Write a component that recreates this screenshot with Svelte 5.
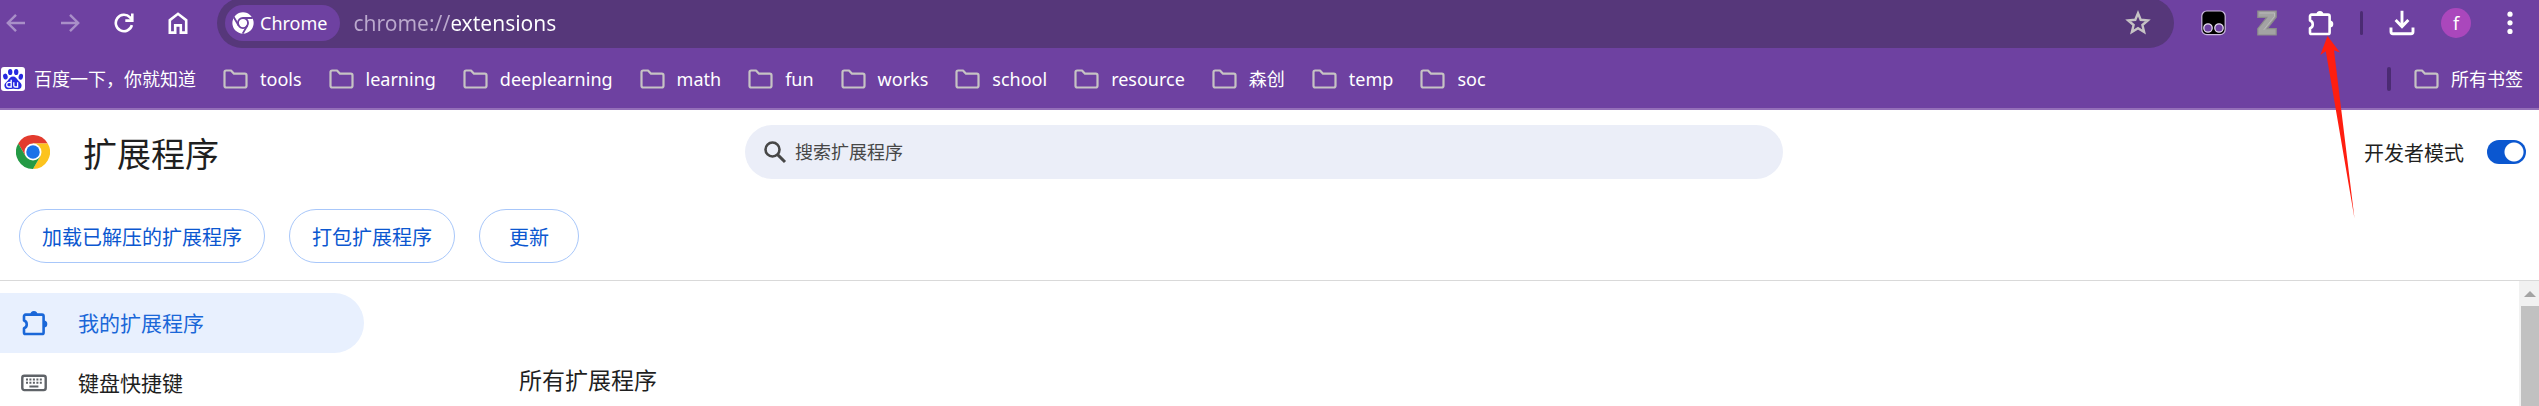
<script>
  const folders = ['tools', 'learning', 'deeplearning', 'math', 'fun', 'works', 'school', 'resource', '森创', 'temp', 'soc'];
  let url = $state('chrome://extensions');
  let query = $state('');
  let devMode = $state(true);
</script>

{#snippet folderIcon()}
  <svg class="folder" width="25" height="20" viewBox="0 0 25 20" aria-hidden="true">
    <path d="M3.2 1.5H8l3 3.2h10.8c1 0 1.7.7 1.7 1.7v10.4c0 1-.7 1.7-1.7 1.7H3.2c-1 0-1.7-.7-1.7-1.7V3.2c0-1 .7-1.7 1.7-1.7z" fill="none" stroke="#c6c3c4" stroke-width="2.2" stroke-linejoin="round" />
  </svg>
{/snippet}

{#snippet puzzleIcon()}
  <svg width="26" height="26" viewBox="0 0 26 26" aria-hidden="true">
    <path d="M3.6 4.6H20a1.6 1.6 0 0 1 1.6 1.6v16.2a1.6 1.6 0 0 1-1.6 1.6H3.6A1.6 1.6 0 0 1 2 22.4v-4.2a4 4 0 0 0 0-7.6V6.2a1.6 1.6 0 0 1 1.6-1.6z" fill="none" stroke="currentColor" stroke-width="2.6" stroke-linejoin="round" />
    <path d="M8.4 4.4a3.5 3.5 0 0 1 7 0zM21.8 10.6a3.5 3.5 0 0 1 0 7z" fill="currentColor" />
  </svg>
{/snippet}

<div class="window">
  <header class="browser">
    <div class="toolbar">
      <nav class="nav" aria-label="导航">
        <button class="icon dim" aria-label="后退">
          <svg width="20" height="20" viewBox="0 0 20 20"><path d="M19 10H2.5M10 1.8L1.8 10l8.2 8.2" fill="none" stroke="currentColor" stroke-width="2.4" /></svg>
        </button>
        <button class="icon dim" aria-label="前进">
          <svg width="20" height="20" viewBox="0 0 20 20"><path d="M1 10h16.5M10 1.8l8.2 8.2-8.2 8.2" fill="none" stroke="currentColor" stroke-width="2.4" /></svg>
        </button>
        <button class="icon" aria-label="重新加载">
          <svg width="20" height="20" viewBox="0 0 20 20"><path d="M17.9 12.2A8.2 8.2 0 1 1 16 4.4l1.5 1.8" fill="none" stroke="currentColor" stroke-width="2.6" /><path d="M18.3 .6v7h-7" fill="none" stroke="currentColor" stroke-width="2.6" /></svg>
        </button>
        <button class="icon" aria-label="主页">
          <svg width="20" height="22" viewBox="0 0 20 22"><path d="M1.8 20.6V8.2L10 1.8l8.2 6.4v12.4h-5.4v-7.2H7.2v7.2z" fill="none" stroke="currentColor" stroke-width="2.6" /></svg>
        </button>
      </nav>

      <div class="omnibox">
        <button class="chip">
          <svg width="22" height="24" viewBox="0 0 24 24" aria-hidden="true">
            <circle cx="12" cy="12" r="11.6" fill="#fff" />
            <circle cx="12" cy="12" r="5.5" fill="none" stroke="#6e41a1" stroke-width="2" />
            <path d="M12 6.5h10.6M7.2 14.8L2 5.8M16.8 14.8L11.6 23.6" stroke="#6e41a1" stroke-width="2" />
          </svg>
          <span>Chrome</span>
        </button>
        <input class="url" type="text" aria-label="地址" spellcheck="false" bind:value={url} />
        <button class="icon star" aria-label="为此标签页添加书签">
          <svg width="26" height="26" viewBox="0 0 26 26"><path d="M13 3.2l2.7 6.6 7.1.6-5.4 4.6 1.7 7-6.1-3.8L6.9 22l1.7-7-5.4-4.6 7.1-.6z" fill="none" stroke="currentColor" stroke-width="2.4" /></svg>
        </button>
      </div>

      <div class="actions">
        <button class="icon" aria-label="Tampermonkey">
          <svg width="25" height="26" viewBox="0 0 25 26"><rect x=".8" y="1" width="23.4" height="23.6" rx="5" fill="#000" stroke="#cdbbe0" stroke-width="1.2" /><g fill="#6e41a1" stroke="#e5dcee" stroke-width="1.3"><circle cx="7" cy="18" r="4.2" /><circle cx="18" cy="18" r="4.2" /></g></svg>
        </button>
        <button class="icon" aria-label="Zotero Connector">
          <svg width="20" height="26" viewBox="0 0 20 26"><path d="M.8 1h18.4v6.2l-9 11.4h9V25H.8v-6.4l9-11.2h-9z" fill="#a3a3a3" stroke="#8b8b8b" stroke-width="1.2" /><path d="M2.5 3h15v3.4L6.8 19.8" fill="none" stroke="#b9b9b9" stroke-width="1" /></svg>
        </button>
        <button class="icon" aria-label="扩展程序">{@render puzzleIcon()}</button>
        <span class="rule"></span>
        <button class="icon" aria-label="下载内容">
          <svg width="26" height="26" viewBox="0 0 26 26"><path d="M13 .8v15M6.6 10l6.4 6.6 6.4-6.6M2 17.6v4.2c0 1.2.8 2 2 2h18c1.2 0 2-.8 2-2v-4.2" fill="none" stroke="currentColor" stroke-width="2.9" /></svg>
        </button>
        <button class="avatar" aria-label="个人资料">f</button>
        <button class="icon" aria-label="菜单">
          <svg width="6" height="24" viewBox="0 0 6 24"><g fill="currentColor"><circle cx="3" cy="3.2" r="2.6" /><circle cx="3" cy="11.8" r="2.6" /><circle cx="3" cy="20.4" r="2.6" /></g></svg>
        </button>
      </div>
    </div>

    <nav class="bookmarks" aria-label="书签">
      <a class="bookmark first" href="#baidu">
        <svg width="24" height="24" viewBox="0 0 24 24" aria-hidden="true">
          <rect width="24" height="24" rx="3" fill="#fff" />
          <g fill="#2629e0">
            <ellipse cx="4.4" cy="9.6" rx="2.3" ry="3" transform="rotate(-12 4.4 9.6)" />
            <ellipse cx="9.2" cy="5" rx="2.2" ry="3.1" />
            <ellipse cx="15.2" cy="5" rx="2.2" ry="3.1" />
            <ellipse cx="19.8" cy="9.8" rx="2.2" ry="3" transform="rotate(12 19.8 9.8)" />
            <path d="M12 9.4c2.6 0 3.6 2.2 5.2 4 1.8 1.8 3.6 3 3.4 5.4-.3 3-2.6 3.5-4.6 3.3-1.6-.1-2.6-.4-4-.4s-2.6.4-4 .4c-2.2.2-4.3-.4-4.6-3.3-.2-2.4 1.8-3.6 3.4-5.4 1.6-1.8 2.6-4 5.2-4z" />
          </g>
          <path d="M10.2 12.8v7.2H8a2.3 2.3 0 0 1 0-4.6h2.2M12.8 15.2v3.2c0 1 .6 1.6 1.6 1.6h2.2v-4.8" fill="none" stroke="#fff" stroke-width="1.3" />
        </svg>
        <span>百度一下，你就知道</span>
      </a>
      {#each folders as name}
        <button class="bookmark">{@render folderIcon()}<span>{name}</span></button>
      {/each}
      <span class="rule wide"></span>
      <button class="bookmark all">{@render folderIcon()}<span>所有书签</span></button>
    </nav>

    <svg class="pointer" width="40" height="184" viewBox="0 0 40 184" aria-hidden="true">
      <path d="M10.5 0L23 16.6L17 14.2L37.5 182.5L8.8 15.2L3.3 19z" fill="#ff1e10" />
    </svg>
  </header>

  <section class="head">
    <div class="title-row">
      <div class="brand">
        <svg width="34" height="34" viewBox="0 0 48 48" aria-hidden="true">
          <path d="M3.2 12A24 24 0 0 1 44.8 12H24L13.6 30z" fill="#e33b2e" />
          <path d="M44.8 12A24 24 0 0 1 24 48L34.4 30 24 12z" fill="#fcc31e" />
          <path d="M24 48A24 24 0 0 1 3.2 12L13.6 30h20.8z" fill="#249a45" />
          <circle cx="24" cy="24" r="12" fill="#fff" />
          <circle cx="24" cy="24" r="9.5" fill="#1a73e8" />
        </svg>
        <h1>扩展程序</h1>
      </div>
      <label class="search">
        <svg width="24" height="24" viewBox="0 0 24 24" aria-hidden="true"><circle cx="9.5" cy="9.5" r="7" fill="none" stroke="#474747" stroke-width="2.6" /><path d="M14.6 14.6l7.4 7.4" stroke="#474747" stroke-width="3" /></svg>
        <input type="search" aria-label="搜索扩展程序" placeholder="搜索扩展程序" bind:value={query} />
      </label>
      <label class="dev">
        <span>开发者模式</span>
        <input type="checkbox" role="switch" bind:checked={devMode} />
      </label>
    </div>
    <div class="buttons">
      <button>加载已解压的扩展程序</button>
      <button>打包扩展程序</button>
      <button>更新</button>
    </div>
  </section>

  <div class="body">
    <nav class="side" aria-label="侧边栏">
      <a class="active" href="#extensions">{@render puzzleIcon()}<span>我的扩展程序</span></a>
      <a href="#shortcuts">
        <svg width="26" height="18" viewBox="0 0 26 18" aria-hidden="true">
          <rect x="1.3" y="1.7" width="23.4" height="14.4" rx="2" fill="none" stroke="#5f6368" stroke-width="2.4" />
          <path d="M5 4.6h2v2H5zM8.4 4.6h2v2h-2zM11.9 4.6h2v2h-2zM15.4 4.6h2v2h-2zM18.8 4.6h2v2h-2zM5 7.8h2v2H5zM8.4 7.8h2v2h-2zM11.9 7.8h2v2h-2zM15.4 7.8h2v2h-2zM18.8 7.8h2v2h-2zM8.4 11.6h9v2h-9z" fill="#5f6368" />
        </svg>
        <span>键盘快捷键</span>
      </a>
    </nav>
    <main><h2>所有扩展程序</h2></main>
    <div class="scrollbar" aria-hidden="true">
      <svg width="12" height="6" viewBox="0 0 12 6"><path d="M6 0l6 6H0z" fill="#a3a3a3" /></svg>
      <div class="thumb"></div>
    </div>
  </div>
</div>

<style>
  :global(body) {
    margin: 0;
    background: #fff;
  }
  .window {
    display: flex;
    flex-direction: column;
    height: 100vh;
    overflow: hidden;
    font-family: 'Noto Sans', 'Noto Sans CJK SC', sans-serif;
    font-size: 18px;
    font-weight: 400;
    color: #1f1f1f;
  }
  button,
  input {
    font: inherit;
    color: inherit;
    margin: 0;
    padding: 0;
    border: 0;
    background: none;
  }
  a {
    color: inherit;
    text-decoration: none;
  }
  svg {
    display: block;
    flex: none;
  }

  .browser {
    position: relative;
    flex: none;
    background: #6e41a1;
    border-bottom: 2px solid #946fb8;
    color: #fff;
  }
  .toolbar {
    display: flex;
    align-items: center;
    height: 46px;
  }
  .icon {
    display: flex;
    align-items: center;
    justify-content: center;
    width: 26px;
    flex: none;
  }
  .dim {
    color: #a98fc8;
  }
  .nav {
    display: flex;
    gap: 28px;
    padding-left: 3px;
    width: 217px;
    box-sizing: border-box;
    flex: none;
  }
  .omnibox {
    display: flex;
    align-items: center;
    flex: 1;
    height: 50px;
    margin: -2px 0;
    padding: 0 23px 0 8px;
    box-sizing: border-box;
    border-radius: 25px;
    background: #56377a;
  }
  .chip {
    display: flex;
    align-items: center;
    gap: 6px;
    height: 36px;
    padding: 0 13px 0 7px;
    border-radius: 18px;
    background: #6e41a1;
  }
  .url {
    flex: 1;
    margin-left: 13px;
    font-size: 21px;
    line-height: 32px;
    outline: none;
    color: transparent;
    background: linear-gradient(90deg, #bba9cd 99px, #fff 99px);
    background-clip: text;
    -webkit-background-clip: text;
  }
  .star {
    color: #c6c3c4;
  }
  .actions {
    display: flex;
    align-items: center;
    gap: 28px;
    flex: none;
    margin: 0 16px 0 26px;
  }
  .rule {
    width: 3px;
    height: 24px;
    border-radius: 2px;
    background: #4b2b73;
    flex: none;
  }
  .actions .rule,
  .avatar {
    margin: 0 -2px;
  }
  .avatar {
    width: 30px;
    height: 30px;
    border-radius: 50%;
    background: #aa47bc;
    line-height: 30px;
    text-align: center;
  }

  .bookmarks {
    display: flex;
    align-items: center;
    gap: 27px;
    height: 62px;
    padding: 3px 16px 0 0;
    box-sizing: border-box;
    line-height: 24px;
  }
  .bookmark {
    display: flex;
    align-items: center;
    gap: 12px;
    white-space: nowrap;
  }
  .first {
    gap: 9px;
    padding-left: 1px;
  }
  .wide {
    width: 4px;
    margin-left: auto;
  }
  .all {
    margin-left: -4px;
  }
  .pointer {
    position: absolute;
    top: 36px;
    right: 182px;
    z-index: 2;
  }

  .head {
    flex: none;
    display: flex;
    flex-direction: column;
    gap: 30px;
    padding: 15px 13px 17px 16px;
    border-bottom: 1px solid #d9d9d9;
  }
  .title-row {
    display: grid;
    grid-template-columns: 729px minmax(0, 1038px) 1fr;
    align-items: center;
  }
  .brand {
    display: flex;
    align-items: center;
    gap: 33px;
  }
  h1 {
    margin: 0;
    padding-top: 4px;
    font-size: 34px;
    line-height: 44px;
    font-weight: 400;
  }
  .search {
    display: flex;
    align-items: center;
    gap: 8px;
    height: 54px;
    padding: 0 18px;
    box-sizing: border-box;
    border-radius: 27px;
    background: #ebeef8;
  }
  .search input {
    flex: 1;
    line-height: 24px;
    outline: none;
  }
  .search input::placeholder {
    color: #474747;
    opacity: 1;
  }
  .dev {
    display: flex;
    align-items: center;
    justify-content: flex-end;
    gap: 23px;
    font-size: 20px;
  }
  .dev input {
    appearance: none;
    width: 39px;
    height: 24px;
    border-radius: 12px;
    background: radial-gradient(circle at 12px 12px, #fff 9px, #747775 10px);
  }
  .dev input:checked {
    background: radial-gradient(circle at 27px 12px, #fff 9px, #0b57d0 10px);
  }
  .buttons {
    display: flex;
    gap: 24px;
    padding-left: 3px;
  }
  .buttons button {
    min-width: 100px;
    height: 54px;
    padding: 0 22px;
    border: 1px solid #a8c7fa;
    border-radius: 27px;
    font-size: 20px;
    color: #0b57d0;
  }

  .body {
    display: flex;
    flex: 1;
    min-height: 0;
  }
  .side {
    width: 364px;
    padding-top: 12px;
    flex: none;
    font-size: 21px;
  }
  .side a {
    display: flex;
    align-items: center;
    gap: 31px;
    height: 60px;
    padding-left: 21px;
  }
  .side span {
    padding-bottom: 2px;
  }
  .side .active {
    gap: 30px;
    padding-left: 22px;
    border-radius: 0 30px 30px 0;
    background: #e8f0fe;
    color: #1a67d8;
  }
  main {
    flex: 1;
    padding: 83px 0 0 155px;
  }
  h2 {
    margin: 0;
    font-size: 23px;
    line-height: 32px;
    font-weight: 400;
  }
  .scrollbar {
    display: flex;
    flex-direction: column;
    align-items: center;
    gap: 9px;
    width: 18px;
    padding: 10px 0 0 2px;
    background: #f1f1f1;
  }
  .thumb {
    flex: 1;
    align-self: stretch;
    background: #c1c1c1;
  }
</style>
